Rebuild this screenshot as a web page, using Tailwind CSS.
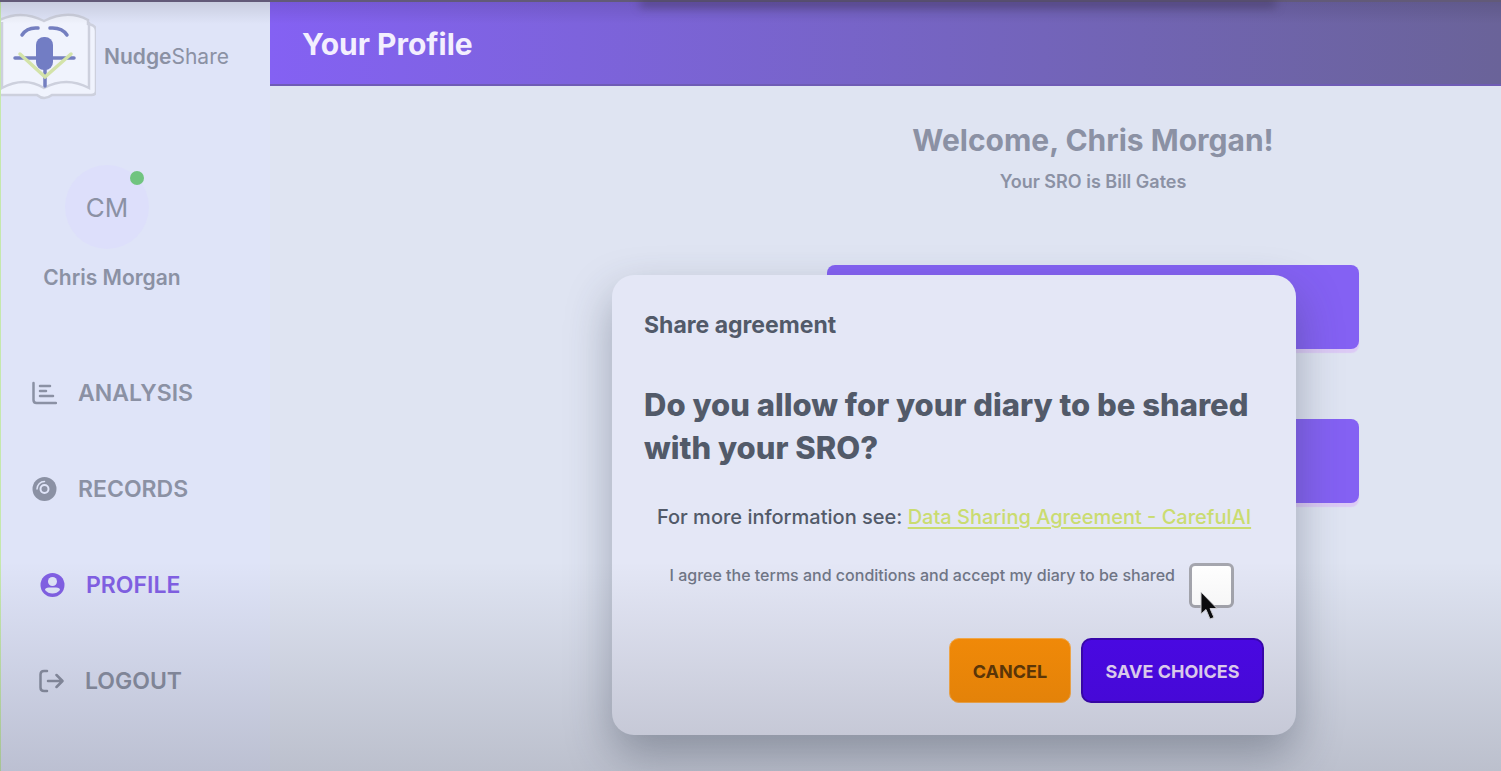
<!DOCTYPE html>
<html lang="en">
<head>
<meta charset="utf-8">
<meta name="viewport" content="width=device-width, initial-scale=1">
<title>NudgeShare - Your Profile</title>
<script src="https://cdn.jsdelivr.net/npm/@tailwindcss/browser@4"></script>
</head>
<body class="relative flex h-screen overflow-hidden bg-[#dfe4f2] font-['Inter','Liberation_Sans',sans-serif] text-[#8b91a4]">

<!-- Sidebar -->
<aside class="w-[270px] shrink-0 border-l border-[#c5e8ad] bg-[#dfe4f8]">
  <a href="#" class="mt-3 flex items-center gap-2 text-[21px] leading-7">
    <svg class="h-[90px] w-[95px] shrink-0" viewBox="1 12 95 90" fill="none" aria-hidden="true">
      <path d="M-2 21 Q20 9 44 21 Q68 9 88 20 V24 Q96 25 96 31 V91 Q96 95 91 95 H52 Q44 101 37 95 H-2Z" fill="#f0f3fd" stroke="#cdd0dd" stroke-width="2.5"/>
      <path d="M2 22 V88 Q24 76 44 88 Q66 76 89 88 V22" stroke="#cdd0dd" stroke-width="2.5"/>
      <path d="M22 35 Q27 27 38 28 M50 28 Q62 27 67 35" stroke="#747fc0" stroke-width="3.5" stroke-linecap="round"/>
      <path d="M15 58 H74 M45 66 V86" stroke="#747fc0" stroke-width="3.5" stroke-linecap="round"/>
      <path d="M20 54 L45 77 L71 54" stroke="#d3e3a9" stroke-width="3.5" stroke-linecap="round"/>
      <rect x="36" y="37" width="17" height="33" rx="8" fill="#727dc4"/>
    </svg>
    <span><b class="font-semibold">Nudge</b>Share</span>
  </a>

  <div class="mt-[63px] flex w-[222px] flex-col items-center">
    <div class="relative mr-[10px] flex size-[84px] items-center justify-center rounded-full bg-[#dddffb] text-[26px]">
      CM
      <span class="absolute top-[6px] right-[5px] size-[14px] rounded-full bg-[#70c47f]"></span>
    </div>
    <p class="mt-[15px] text-[21px] leading-7 font-semibold">Chris Morgan</p>
  </div>

  <nav class="mt-[77px] flex flex-col gap-[48px] pl-[30px] text-[23px] leading-[48px] font-semibold" aria-label="Main">
    <a href="#" class="flex items-center gap-[21px]">
      <svg class="size-[26px]" viewBox="0 0 26 26" fill="none" stroke="currentColor" stroke-width="2.5" stroke-linecap="round" stroke-linejoin="round" aria-hidden="true"><path d="M2.500 3 V20 Q2.500 23 5.500 23 H25 M9 6 H19 M9 11 H15 M9 16 H22"/></svg>
      ANALYSIS
    </a>
    <a href="#" class="flex items-center gap-[21px]">
      <svg class="size-[26px]" viewBox="0 0 26 26" fill="none" aria-hidden="true"><circle cx="13.500" cy="13" r="12" fill="currentColor"/><circle cx="13.500" cy="13" r="4" stroke="#dfe4f8" stroke-width="2"/><path d="M6 13 A7.500 7.500 0 0 1 13.500 5.500" stroke="#dfe4f8" stroke-width="1.500" stroke-linecap="round"/></svg>
      RECORDS
    </a>
    <a href="#" class="flex items-center gap-[21px] pl-2 text-[#8160e4]" aria-current="page">
      <svg class="size-[26px]" viewBox="0 0 26 26" aria-hidden="true"><circle cx="13.500" cy="13" r="12" fill="currentColor"/><circle cx="13.500" cy="9.500" r="4.500" fill="#dfe4f8"/><path d="M6 18 Q6 15.500 10 15.500 H17 Q21 15.500 21 18 Q18 21.500 13.500 21.500 Q9 21.500 6 18Z" fill="#dfe4f8"/></svg>
      PROFILE
    </a>
    <a href="#" class="flex items-center gap-[21px] pl-[7px]">
      <svg class="size-[26px]" viewBox="0 0 26 26" fill="none" stroke="currentColor" stroke-width="2.500" stroke-linecap="round" stroke-linejoin="round" aria-hidden="true"><path d="M9 3 H6 Q2.500 3 2.500 6.500 V19.500 Q2.500 23 6 23 H9 M10 13 H24 M18.500 7 L24.500 13 L18.500 19"/></svg>
      LOGOUT
    </a>
  </nav>
</aside>

<!-- Profile page -->
<div class="min-w-0 flex-1">
  <header class="flex h-[86px] items-center border-b-2 border-[#6f5cb5] bg-linear-to-r from-[#8461f3] to-[#6a6399] px-8">
    <h1 class="mt-1 text-[30px] leading-9 font-bold text-[#f3effe]">Your Profile</h1>
  </header>
  <main class="flex flex-col items-center pl-[415px]">
    <h2 class="mt-9 text-[30px] leading-9 font-bold">Welcome, Chris Morgan!</h2>
    <p class="mt-[10px] text-lg leading-7 font-semibold">Your SRO is Bill Gates</p>
    <div class="mt-[69px] flex w-[532px] flex-col gap-[70px]">
      <button type="button" aria-label="Share diary" class="h-[84px] rounded-lg bg-[#8461f3] shadow-[0_4px_1px_#dccaf5]"></button>
      <button type="button" aria-label="Edit profile" class="h-[84px] rounded-lg bg-[#8461f3] shadow-[0_4px_1px_#dccaf5]"></button>
    </div>
  </main>
</div>

<!-- Share agreement dialog -->
<div class="absolute inset-0 flex items-start justify-center pt-[275px] pl-[407px]">
  <section role="dialog" aria-labelledby="dialog-title" class="w-[684px] rounded-[22px] bg-[#e4e7f6] px-8 pt-9 pb-8 text-[#525a69] shadow-[0_20px_45px_rgba(50,60,80,0.38)]">
    <h3 id="dialog-title" class="text-[23px] leading-7 font-bold">Share agreement</h3>
    <p class="mt-11 text-[31px] leading-[43px] font-extrabold">Do you allow for your diary to be shared with your SRO?</p>
    <p class="mt-8 text-center text-[20px] leading-8 font-medium whitespace-nowrap">For more information see: <a href="#" class="text-[#cadc70] underline underline-offset-3">Data Sharing Agreement - CarefulAI</a></p>
    <div class="mt-[30px] flex items-start justify-end gap-[14px] pr-[30px]">
      <label for="agree" class="text-base leading-6 font-medium text-[#707686]">I agree the terms and conditions and accept my diary to be shared</label>
      <input id="agree" type="checkbox" class="size-[45px] appearance-none rounded-md border-3 border-[#a5a6ae] bg-white">
    </div>
    <div class="mt-[30px] flex justify-end gap-[10px] text-lg font-bold">
      <button type="button" class="h-[65px] w-[122px] rounded-[10px] border border-[#ffb04c] bg-[#ff9107] pt-[2px] text-[#623906]">CANCEL</button>
      <button type="button" class="h-[65px] w-[183px] rounded-[10px] border-2 border-[#3b06b4] bg-[#4d08ef] pt-[2px] text-[#ecdcff]">SAVE CHOICES</button>
    </div>
  </section>
</div>

<!-- Mouse pointer -->
<svg class="absolute top-[590px] left-[1199px] h-[32px] w-[20px]" viewBox="0 0 20 32" aria-hidden="true"><path d="M2 2 V24 L7 19.500 L11 29 L15 27.500 L11 18.500 H18Z" fill="#0b0b0d" stroke="#d4d4d8" stroke-width="1"/></svg>

<!-- Edge shading -->
<div class="pointer-events-none absolute inset-x-0 bottom-0 h-[210px] bg-linear-to-b from-[#101018]/0 to-[#101018]/17"></div>
<div class="pointer-events-none absolute inset-x-0 top-0 h-[24px] border-t-2 border-[#625a78] bg-linear-to-b from-black/10 to-black/0"></div>
<div class="pointer-events-none absolute top-0 right-[225px] left-[640px] h-2 bg-linear-to-b from-[#40355c]/90 to-[#40355c]/30 blur-[5px]"></div>
</body>
</html>
